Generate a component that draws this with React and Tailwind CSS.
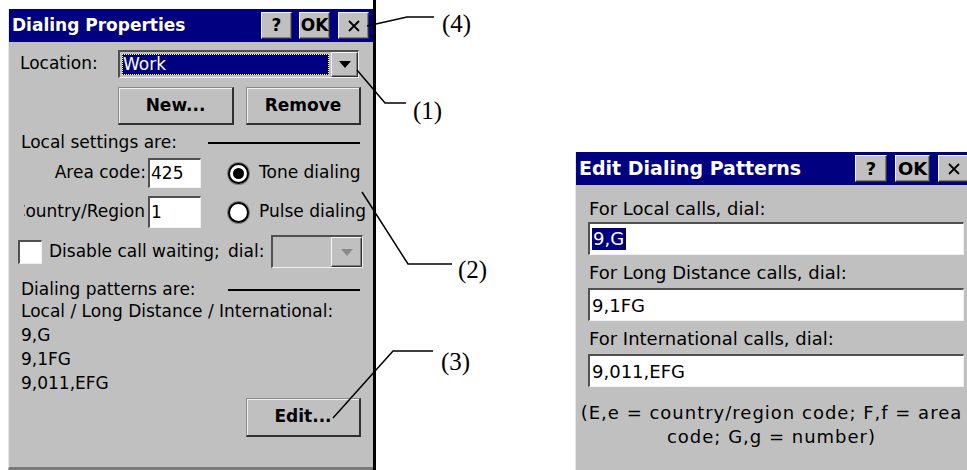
import React from "react";

const sunken =
  "border-t-2 border-l-2 border-b border-r border-t-[#505050] border-l-[#505050] border-b-[#f0f0f0] border-r-[#f0f0f0]";
const raisedSmall =
  "border border-t-[#f4f4f4] border-l-[#f4f4f4] border-r-[#303030] border-b-[#303030] shadow-[inset_-1px_-1px_0_#808080]";
const raisedBtn =
  "border-t border-l border-r-2 border-b-2 border-t-[#8a8a8a] border-l-[#8a8a8a] border-r-[#303030] border-b-[#303030] shadow-[inset_1px_1px_0_#f0f0f0]";

function TitleBtn({ w, children, extra = "" }) {
  return (
    <div
      className={`flex-none h-[27px] bg-[#c0c0c0] flex items-center justify-center text-black font-bold ${raisedSmall} ${extra}`}
      style={{ width: w }}
    >
      {children}
    </div>
  );
}

function XGlyph() {
  return (
    <svg width="14" height="14" viewBox="0 0 14 14">
      <path d="M2 2 L12 12 M12 2 L2 12" stroke="#000" strokeWidth="1.8" />
    </svg>
  );
}

function DownArrow({ color = "#000" }) {
  return (
    <svg width="12" height="7" viewBox="0 0 12 7">
      <path d="M0 0 H12 L6 7 Z" fill={color} />
    </svg>
  );
}

function LeftDialog() {
  return (
    <div className="w-[365px] h-[461px] bg-[#c0c0c0] flex flex-col overflow-hidden border-l border-l-[#e6e6e6] border-b-[3px] border-b-[#7a7a7a] text-[17px]">
      {/* title bar */}
      <div className="h-[33px] bg-[#000080] flex items-center pl-[3px] pr-[4px] flex-none">
        <div className="flex-1 text-white font-bold text-[17px] leading-none whitespace-nowrap">
          Dialing Properties
        </div>
        <TitleBtn w={31}>?</TitleBtn>
        <TitleBtn w={31} extra="ml-[7px]">OK</TitleBtn>
        <TitleBtn w={31} extra="ml-[8px]">
          <XGlyph />
        </TitleBtn>
      </div>

      {/* location */}
      <div className="mt-[8px] h-[28px] flex items-center flex-none">
        <div className="w-[109px] pl-[11px] whitespace-nowrap">Location:</div>
        <div className={`w-[241px] h-[28px] flex bg-white ${sunken}`}>
          <div className="flex-1 p-[2px] bg-[#c0c0c0]">
            <div className="w-full h-full bg-[#000080] outline-1 outline-dotted outline-white -outline-offset-1 text-white flex items-center pl-[1px] leading-none">
              Work
            </div>
          </div>
          <div className={`w-[27px] h-full bg-[#c0c0c0] flex items-center justify-center ${raisedSmall}`}>
            <DownArrow />
          </div>
        </div>
      </div>

      {/* New / Remove */}
      <div className="mt-[9px] h-[38px] flex flex-none">
        <div className={`ml-[109px] w-[116px] h-full bg-[#c0c0c0] flex items-center justify-center font-bold ${raisedBtn}`}>
          New...
        </div>
        <div className={`ml-[12px] w-[115px] h-full bg-[#c0c0c0] flex items-center justify-center font-bold ${raisedBtn}`}>
          Remove
        </div>
      </div>

      {/* local settings */}
      <div className="mt-[8px] h-[20px] flex items-center flex-none">
        <div className="pl-[12px] whitespace-nowrap">Local settings are:</div>
        <div className="ml-auto mr-[13px] w-[152px] h-[2px] bg-black" />
      </div>

      {/* area code */}
      <div className="mt-[5px] h-[30px] flex items-center flex-none">
        <div className="w-[139px] pr-[2px] text-right whitespace-nowrap">Area code:</div>
        <div className={`w-[53px] h-[30px] bg-white flex items-center pl-[1px] ${sunken}`}>425</div>
        <div className="ml-[27px] w-[21px] h-[21px] rounded-full border-2 border-black bg-white flex items-center justify-center shadow-[0_0_0_1px_#808080]">
          <div className="w-[11px] h-[11px] rounded-full bg-black" />
        </div>
        <div className="ml-[10px] whitespace-nowrap">Tone dialing</div>
      </div>

      {/* country/region */}
      <div className="mt-[8px] h-[32px] flex items-center flex-none">
        <div className="ml-[15px] w-[124px] pr-[3px] overflow-hidden flex justify-end">
          <span className="whitespace-nowrap flex-none">Country/Region</span>
        </div>
        <div className={`w-[53px] h-[32px] bg-white flex items-center pl-[1px] ${sunken}`}>1</div>
        <div className="ml-[27px] w-[21px] h-[21px] rounded-full border-2 border-black bg-white shadow-[0_0_0_1px_#808080]" />
        <div className="ml-[10px] whitespace-nowrap">Pulse dialing</div>
      </div>

      {/* call waiting */}
      <div className="mt-[7px] h-[33px] flex items-center flex-none">
        <div className="w-[219px] flex items-center">
          <div className={`ml-[9px] w-[24px] h-[24px] bg-white ${sunken}`} />
          <div className="ml-[7px] whitespace-nowrap">Disable call waiting;</div>
        </div>
        <div className="whitespace-nowrap">dial:</div>
        <div className={`ml-[7px] w-[92px] h-[33px] flex bg-[#c0c0c0] ${sunken}`}>
          <div className="flex-1" />
          <div className={`w-[31px] h-full bg-[#c0c0c0] flex items-center justify-center ${raisedSmall}`}>
            <DownArrow color="#8a8a8a" />
          </div>
        </div>
      </div>

      {/* dialing patterns */}
      <div className="mt-[12px] h-[20px] flex items-center flex-none">
        <div className="pl-[12px] whitespace-nowrap">Dialing patterns are:</div>
        <div className="ml-auto mr-[13px] w-[132px] h-[2px] bg-black" />
      </div>
      <div className="-mt-[1px] pl-[12px] leading-[24px] flex-none">
        <div className="whitespace-nowrap">Local / Long Distance / International:</div>
        <div>9,G</div>
        <div>9,1FG</div>
        <div>9,011,EFG</div>
      </div>

      {/* edit */}
      <div className="mt-[3px] h-[39px] flex flex-none">
        <div className={`ml-[237px] w-[115px] h-full bg-[#c0c0c0] flex items-center justify-center font-bold ${raisedBtn}`}>
          Edit...
        </div>
      </div>
    </div>
  );
}

function Field({ children }) {
  return (
    <div className={`h-[33px] w-[376px] bg-white flex items-center pl-[2px] ${sunken}`}>
      {children}
    </div>
  );
}

function RightDialog() {
  return (
    <div className="w-[392px] h-[318px] bg-[#c0c0c0] flex flex-col overflow-hidden border-l border-l-[#e6e6e6] text-[18px]">
      <div className="h-[33px] bg-[#000080] flex items-center pl-[3px] flex-none">
        <div className="flex-1 text-white font-bold text-[19px] leading-none whitespace-nowrap">
          Edit Dialing Patterns
        </div>
        <TitleBtn w={32}>?</TitleBtn>
        <TitleBtn w={35} extra="ml-[8px]">OK</TitleBtn>
        <TitleBtn w={32} extra="ml-[8px] -mr-[3px]">
          <XGlyph />
        </TitleBtn>
      </div>
      <div className="pl-[12px] flex flex-col">
        <div className="mt-[12px] h-[24px] leading-[24px] pl-[1px] whitespace-nowrap">For Local calls, dial:</div>
        <div className="mt-[1px]">
          <Field>
            <span className="bg-[#000080] text-white leading-[22px] px-[1px]">9,G</span>
            <span className="w-[1px] h-[22px] bg-black" />
          </Field>
        </div>
        <div className="mt-[6px] h-[24px] leading-[24px] pl-[1px] whitespace-nowrap">For Long Distance calls, dial:</div>
        <div className="mt-[3px]">
          <Field>9,1FG</Field>
        </div>
        <div className="mt-[6px] h-[24px] leading-[24px] pl-[1px] whitespace-nowrap">For International calls, dial:</div>
        <div className="mt-[3px]">
          <Field>9,011,EFG</Field>
        </div>
      </div>
      <div className="mt-[14px] text-center leading-[24px] whitespace-nowrap tracking-[1px]">
        <div>(E,e = country/region code; F,f = area</div>
        <div>code; G,g = number)</div>
      </div>
    </div>
  );
}

function Annotations() {
  const label = "absolute font-['Liberation_Serif',serif] text-[25px] leading-none text-black";
  return (
    <>
      <svg className="absolute left-0 top-0 pointer-events-none" width="967" height="470">
        <polyline points="367,26 407,17 434,17" fill="none" stroke="#000" strokeWidth="1.5" />
        <polyline points="357,70 385,103 406,103" fill="none" stroke="#000" strokeWidth="1.5" />
        <polyline points="362,192 408,264 452,264" fill="none" stroke="#000" strokeWidth="1.5" />
        <polyline points="333,418 393,351 433,351" fill="none" stroke="#000" strokeWidth="1.5" />
      </svg>
      <span className={`${label} left-[442px] top-[11px]`}>(4)</span>
      <span className={`${label} left-[413px] top-[98px]`}>(1)</span>
      <span className={`${label} left-[458px] top-[257px]`}>(2)</span>
      <span className={`${label} left-[441px] top-[349px]`}>(3)</span>
    </>
  );
}

export default function App() {
  return (
    <div className="relative w-[967px] h-[470px] bg-white overflow-hidden flex font-['DejaVu_Sans',sans-serif] text-black">
      <div className="w-[373px] h-full pt-[9px] pl-[8px] flex-none">
        <LeftDialog />
      </div>
      <div className="w-[3px] h-full bg-black flex-none" />
      <div className="w-[199px] flex-none" />
      <div className="w-[392px] pt-[152px] flex-none">
        <RightDialog />
      </div>
      <Annotations />
    </div>
  );
}
